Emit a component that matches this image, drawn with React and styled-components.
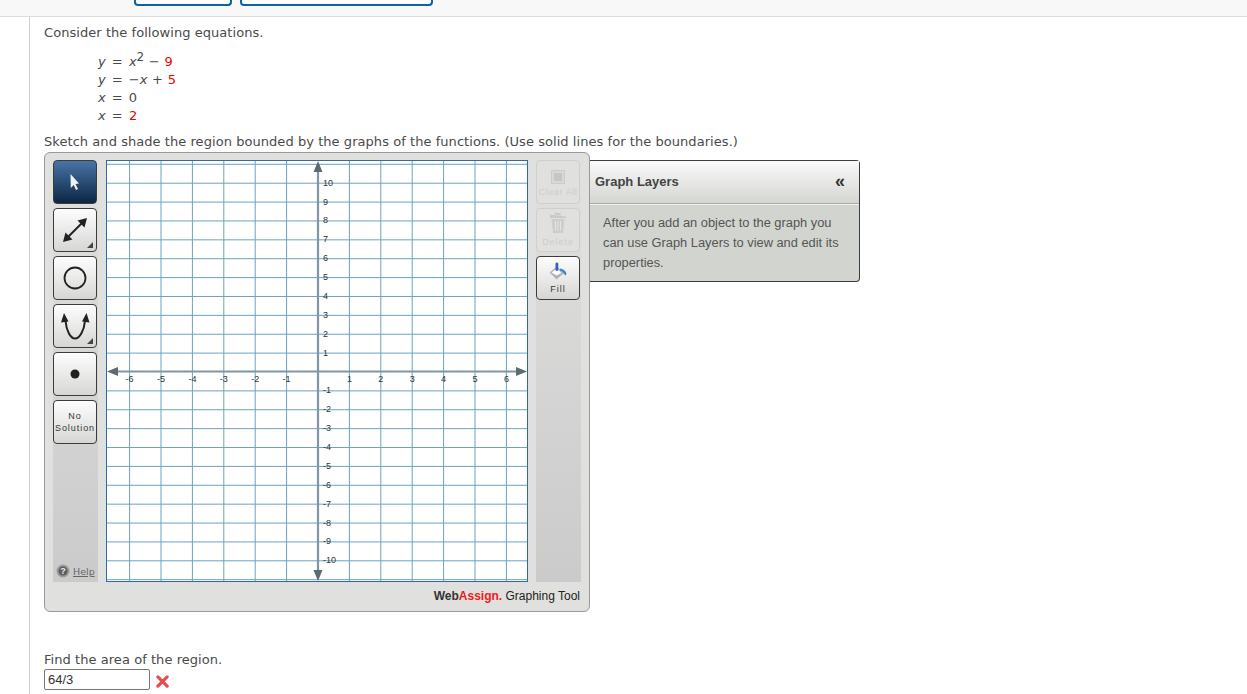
import styled, { createGlobalStyle } from "styled-components";

const GlobalStyle = createGlobalStyle`
  html, body {
    margin: 0;
    padding: 0;
    height: 694px;
    overflow: hidden;
    background: #fff;
    font-family: "DejaVu Sans", Verdana, sans-serif;
  }
`;

const TopBar = styled.div`
  height: 16px;
  background: #f8f8f8;
  border-bottom: 1px solid #dedede;
  display: flex;
  gap: 8px;
  padding-left: 134px;
`;

const TopButton = styled.div`
  width: ${(props) => props.w}px;
  height: 4px;
  background: #fff;
  border: 2px solid #0f629b;
  border-top: 0;
  border-radius: 0 0 4px 4px;
`;

const Main = styled.div`
  margin-left: 29px;
  border-left: 1px solid #cfcfcf;
  padding: 8px 0 0 14px;
  height: 680px;
`;

const Para = styled.div`
  font-size: 13px;
  line-height: 16px;
  letter-spacing: 0.055px;
  color: #4a4a4a;
`;

const SketchPara = styled(Para)`
  margin-top: 9px;
`;

const Equations = styled.div`
  margin: 12px 0 0 54px;
  font-size: 13px;
  line-height: 18px;
  color: #4a4a4a;
`;

const EqLine = styled.div`
  height: 18px;
  white-space: pre;
  word-spacing: 2px;
`;

const Op = styled.span`
  word-spacing: 0.5px;
`;

const Var = styled.i`
  font-style: italic;
`;

const Red = styled.span`
  color: #f00000;
`;

const Sup = styled.sup`
  font-size: 12px;
  line-height: 0;
  vertical-align: baseline;
  position: relative;
  top: -5px;
`;

const Tool = styled.div`
  margin-top: 2px;
  display: flex;
  align-items: flex-start;
`;

const ToolPanel = styled.div`
  width: 546px;
  height: 460px;
  box-sizing: border-box;
  background: #e0e0df;
  border: 1px solid #999;
  border-radius: 6px;
  padding: 7px 8px 0 8px;
`;

const ToolRow = styled.div`
  display: flex;
  align-items: stretch;
`;

const Column = styled.div`
  width: 45px;
  height: 422px;
  display: flex;
  flex-direction: column;
  gap: 4px;
  background: linear-gradient(#e0e0df, #cbcbcb);
  position: relative;
`;

const ToolButton = styled.div`
  width: 44px;
  height: 44px;
  box-sizing: border-box;
  border: 1px solid ${(props) => (props.$faded ? "#cfcfcf" : "#3c3c3c")};
  border-radius: 4px;
  background: ${(props) =>
    props.$active
      ? "linear-gradient(#4a74a6, #0b2644)"
      : props.$faded
      ? "#e0e0df"
      : "linear-gradient(#fdfdfd, #d6d7d5)"};
  display: flex;
  flex-direction: column;
  align-items: center;
  justify-content: center;
  position: relative;
  font-family: "Liberation Sans", Arial, sans-serif;
  font-size: 9px;
  letter-spacing: 0.95px;
  line-height: 12px;
  text-align: center;
  white-space: nowrap;
  color: ${(props) => (props.$faded ? "#cdcdcd" : "#383838")};
`;

const ClearButton = styled(ToolButton)`
  padding-top: 4px;
  letter-spacing: 0.6px;
`;

const IconLabel = styled.span`
  margin-top: ${(props) => props.$gap ?? 3}px;
`;

const Corner = styled.span`
  position: absolute;
  right: 3px;
  bottom: 3px;
  width: 0;
  height: 0;
  border-left: 6px solid transparent;
  border-bottom: 6px solid #444;
`;

const HelpBox = styled.div`
  position: absolute;
  left: 0;
  right: 0;
  bottom: 0;
  height: 22px;
  background: #cbcbcb;
  display: flex;
  align-items: center;
  padding-left: 3px;
  gap: 3px;
  font-family: "DejaVu Sans", Verdana, sans-serif;
  font-size: 9.5px;
  color: #666;
  text-decoration: underline;
`;

const GraphBox = styled.div`
  width: 422px;
  height: 422px;
  margin: 0 8px 0 8px;
  background: #fff;
  line-height: 0;
`;

const ToolFooter = styled.div`
  margin-top: 6px;
  text-align: right;
  font-family: "Liberation Sans", Arial, sans-serif;
  font-size: 12px;
  line-height: 16px;
  color: #222;
  padding-right: 1px;
`;

const Brand = styled.b`
  color: #333;
`;

const BrandRed = styled.b`
  color: #ed1c24;
`;

const Layers = styled.div`
  width: 270px;
  height: 122px;
  margin-top: 8px;
  box-sizing: border-box;
  border: 1px solid #3c3c3c;
  border-left: 0;
  border-radius: 0 4px 4px 0;
  background: #d2d4d0;
  font-family: "Liberation Sans", Arial, sans-serif;
`;

const LayersHead = styled.div`
  height: 43px;
  box-sizing: border-box;
  border-bottom: 1px solid #a9aaa8;
  box-shadow: 0 1px 0 #f2f3f1;
  background: linear-gradient(#fafafa, #d4d6d2);
  display: flex;
  align-items: center;
  justify-content: space-between;
  padding: 0 14px 2px 5px;
  font-size: 13px;
  font-weight: bold;
  color: #444;
`;

const Collapse = styled.span`
  font-size: 18px;
  font-weight: bold;
  color: #333;
`;

const LayersBody = styled.div`
  padding: 9px 16px 0 13px;
  font-size: 12.85px;
  line-height: 20px;
  color: #555;
`;

const FindArea = styled(Para)`
  margin-top: 40px;
`;

const AnswerRow = styled.div`
  display: flex;
  align-items: center;
  gap: 6px;
  margin-top: 1px;
`;

const Answer = styled.input`
  width: 106px;
  height: 21px;
  box-sizing: border-box;
  border: 1px solid #777;
  border-radius: 2px;
  padding: 0 3px;
  font-family: "Liberation Sans", Arial, sans-serif;
  font-size: 13px;
  color: #333;
`;

const CrossWrap = styled.span`
  display: flex;
  margin-top: 3px;
`;

const UNIT_X = 31.4;
const UNIT_Y = 18.88;
const CX = 212;
const CY = 212;

const xs = [-6, -5, -4, -3, -2, -1, 1, 2, 3, 4, 5, 6];
const ys = [11, 10, 9, 8, 7, 6, 5, 4, 3, 2, 1, -1, -2, -3, -4, -5, -6, -7, -8, -9, -10, -11];

const Graph = () => (
  <svg width="422" height="422" viewBox="0 0 422 422">
    {xs.map((v) => (
      <line key={v} x1={CX + v * UNIT_X} x2={CX + v * UNIT_X} y1="0" y2="422" stroke="#6aa3bd" strokeWidth="1" />
    ))}
    {ys.map((v) => (
      <line key={v} x1="0" x2="422" y1={CY - v * UNIT_Y} y2={CY - v * UNIT_Y} stroke="#6aa3bd" strokeWidth="1" />
    ))}
    <line x1={CX} x2={CX} y1="6" y2="416" stroke="#7f97a5" strokeWidth="2.2" />
    <line x1="6" x2="416" y1={CY - 0.5} y2={CY - 0.5} stroke="#7f97a5" strokeWidth="2.2" />
    <path d="M212 1l4.500 11h-9zM212 421l4.500-11h-9zM1 211.500l11-4.500v9zM421 211.500l-11-4.500v9z" fill="#5d6a72" />
    <g fontFamily="Liberation Sans, Arial, sans-serif" fontSize="9" fill="#333">
      {xs.map((v) => (
        <text key={v} x={CX + v * UNIT_X} y={CY + 9.5} textAnchor="middle">
          {v}
        </text>
      ))}
      {ys
        .filter((v) => Math.abs(v) <= 10)
        .map((v) => (
          <text key={v} x={CX + 5} y={CY - v * UNIT_Y + 2.5}>
            {v}
          </text>
        ))}
    </g>
    <rect x="0.5" y="0.5" width="421" height="421" fill="none" stroke="#2e6ba5" />
  </svg>
);

const Cursor = () => (
  <svg width="12" height="18" viewBox="0 0 12 18">
    <path d="M1.500 1l8.500 9.500-3.500.5 2.500 5-2 1-2.200-5-3 3z" fill="#eef2f6" />
  </svg>
);

const LineIcon = () => (
  <svg width="28" height="28" viewBox="0 0 28 28">
    <path d="M6 22L22 6" stroke="#222" strokeWidth="2" />
    <path d="M26 2l-9.500 2.500 7 7zM2 26l9.500-2.500-7-7z" fill="#222" />
  </svg>
);

const CircleIcon = () => (
  <svg width="26" height="26" viewBox="0 0 26 26">
    <circle cx="13" cy="13" r="10.500" fill="none" stroke="#222" strokeWidth="1.8" />
  </svg>
);

const ParabolaIcon = () => (
  <svg width="30" height="30" viewBox="0 0 30 30">
    <path d="M5.500 10C6.500 20 10.500 27.500 15 27.500S24 20 25 10" fill="none" stroke="#222" strokeWidth="2" />
    <path d="M4 2L1 11.500l7.500-1zM26.500 2l-4.500 8.500 7.500 1z" fill="#222" />
  </svg>
);

const Dot = () => (
  <svg width="10" height="10" viewBox="0 0 10 10">
    <circle cx="5" cy="5" r="4.500" fill="#222" />
  </svg>
);

const ClearIcon = () => (
  <svg width="14" height="14" viewBox="0 0 14 14">
    <rect x="0.500" y="0.500" width="13" height="13" fill="#d8d8d8" stroke="#cbcbcb" />
    <rect x="3" y="3" width="8" height="8" fill="#c6c6c6" />
  </svg>
);

const TrashIcon = () => (
  <svg width="18" height="21" viewBox="0 0 18 21">
    <path d="M1 2.500L17 4.500v1.500H1zM6 .5l6 .8-.3 2-6-.8z" fill="#c9c9c9" />
    <path d="M2.500 7h13l-1.500 14H4z" fill="#cdcdcd" />
    <path d="M6.500 9v10M9 9v10M11.500 9v10" stroke="#e4e4e4" />
  </svg>
);

const FillIcon = () => (
  <svg width="19" height="18" viewBox="0 0 19 18">
    <path d="M1 10.500L8 5l6.500 6-7 6z" fill="#aeb3b8" stroke="#9a9ea2" strokeWidth="0.5" />
    <path d="M2.500 10.500L8 6.500l4.500 4.500-5 2.500z" fill="#fbfbfb" />
    <rect x="6.500" y="0.500" width="2.800" height="8.500" rx="1.400" fill="#2a66bd" />
    <path d="M11 6.500c3 .2 5.500 2 6.500 5l-1 2-1.500-1.500c-.8-1.800-2-3-4-3.500z" fill="#3d85cf" />
  </svg>
);

const HelpIcon = () => (
  <svg width="14" height="14" viewBox="0 0 14 14">
    <circle cx="7" cy="7" r="6.500" fill="#9a9a9a" />
    <circle cx="7" cy="7" r="4.500" fill="#5c5c5c" />
    <text x="7" y="10" textAnchor="middle" fontSize="9" fontWeight="bold" fill="#eee" fontFamily="Liberation Sans, sans-serif">?</text>
  </svg>
);

const CrossIcon = () => (
  <svg width="13" height="13" viewBox="0 0 14 14">
    <path d="M2 2l10 10M12 2L2 12" stroke="#ee4b50" strokeWidth="3.400" strokeLinecap="round" />
  </svg>
);

const App = () => {
  return (
    <>
      <GlobalStyle />
      <TopBar>
        <TopButton w={94} />
        <TopButton w={189} />
      </TopBar>
      <Main>
        <Para>Consider the following equations.</Para>
        <Equations>
          <EqLine>
            <Var>y</Var> = <Var>x</Var><Sup>2</Sup><Op> − </Op><Red>9</Red>
          </EqLine>
          <EqLine>
            <Var>y</Var> = −<Var>x</Var><Op> + </Op><Red>5</Red>
          </EqLine>
          <EqLine>
            <Var>x</Var> = 0
          </EqLine>
          <EqLine>
            <Var>x</Var> = <Red>2</Red>
          </EqLine>
        </Equations>
        <SketchPara>
          Sketch and shade the region bounded by the graphs of the functions. (Use solid lines for the boundaries.)
        </SketchPara>
        <Tool>
          <ToolPanel>
            <ToolRow>
              <Column>
                <ToolButton $active><Cursor /></ToolButton>
                <ToolButton><LineIcon /><Corner /></ToolButton>
                <ToolButton><CircleIcon /></ToolButton>
                <ToolButton><ParabolaIcon /><Corner /></ToolButton>
                <ToolButton><Dot /></ToolButton>
                <ToolButton>No<br />Solution</ToolButton>
                <HelpBox><HelpIcon />Help</HelpBox>
              </Column>
              <GraphBox><Graph /></GraphBox>
              <Column>
                <ClearButton $faded><ClearIcon /><IconLabel $gap={2}>Clear All</IconLabel></ClearButton>
                <ToolButton $faded><TrashIcon /><IconLabel $gap={3}>Delete</IconLabel></ToolButton>
                <ToolButton><FillIcon /><IconLabel>Fill</IconLabel></ToolButton>
              </Column>
            </ToolRow>
            <ToolFooter>
              <Brand>Web</Brand><BrandRed>Assign.</BrandRed> Graphing Tool
            </ToolFooter>
          </ToolPanel>
          <Layers>
            <LayersHead>
              Graph Layers
              <Collapse>«</Collapse>
            </LayersHead>
            <LayersBody>
              After you add an object to the graph you can use Graph Layers to view and edit its properties.
            </LayersBody>
          </Layers>
        </Tool>
        <FindArea>Find the area of the region.</FindArea>
        <AnswerRow>
          <Answer defaultValue="64/3" readOnly />
          <CrossWrap><CrossIcon /></CrossWrap>
        </AnswerRow>
      </Main>
    </>
  );
};

export default App;
